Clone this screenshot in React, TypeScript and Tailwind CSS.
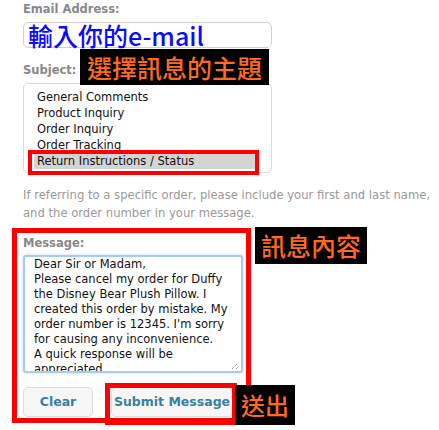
import React from "react";

const font = { fontFamily: '"DejaVu Sans", "Liberation Sans", sans-serif' };
const cjk = { fontFamily: '"Noto Sans CJK TC", "Noto Sans CJK SC", sans-serif' };

export default function App() {
  const items = ["General Comments", "Product Inquiry", "Order Inquiry", "Order Tracking"];
  const msg = [
    "Dear Sir or Madam,",
    "Please cancel my order for Duffy",
    "the Disney Bear Plush Pillow. I",
    "created this order by mistake. My",
    "order number is 12345. I'm sorry",
    "for causing any inconvenience.",
    "A quick response will be",
    "appreciated.",
  ];
  return (
    <div className="relative w-[439px] h-[430px] bg-white overflow-hidden" style={font}>
      <div className="pl-[23px] flex flex-col items-start">
        <div className="text-[11.5px] font-bold text-[#888] leading-[16px] pt-[1px]">Email Address:</div>
        <div className="mt-[5px] w-[249px] h-[26px] border border-[#d0d0d0] rounded-[5px] flex items-center pl-[4px]">
          <span className="text-[25px] leading-[24px] font-medium text-[#0a0aff] whitespace-nowrap" style={cjk}>輸入你的e-mail</span>
        </div>
        <div className="mt-[14px] text-[11.5px] font-bold text-[#888] leading-[16px]">Subject:</div>
        <div className="mt-[5px] w-[249px] h-[90px] border border-[#d8d8d8] rounded-[5px] pt-[5px] text-[11.5px] text-[#111] leading-[16px] flex flex-col">
          {items.map((t) => (
            <div key={t} className="ml-[10px] pl-[3px] whitespace-nowrap">{t}</div>
          ))}
          <div className="ml-[10px] w-[223px] pl-[3px] bg-[#d4d4d4] whitespace-nowrap">Return Instructions / Status</div>
        </div>
        <p className="mt-[13px] w-[414px] text-[11.6px] leading-[18px] text-[#999]">
          If referring to a specific order, please include your first and last name, and the order number in your message.
        </p>
        <div className="mt-[13px] text-[11.5px] font-bold text-[#888] leading-[16px]">Message:</div>
        <div className="relative mt-[4px] w-[220px] h-[118px] border-2 border-[#a9cbec] rounded-[3px] shadow-[0_0_3px_#b8d6f3] bg-white overflow-hidden pl-[9px] text-[11.5px] leading-[15px] text-[#111] flex flex-col">
          {msg.map((l, i) => (
            <div key={i} className="whitespace-nowrap">{l}</div>
          ))}
          <svg className="absolute right-[1px] bottom-[1px]" width="9" height="9" viewBox="0 0 9 9">
            <line x1="1" y1="8" x2="8" y2="1" stroke="#777" strokeWidth="1" strokeDasharray="1 1" />
            <line x1="5" y1="8" x2="8" y2="5" stroke="#777" strokeWidth="1" strokeDasharray="1 1" />
          </svg>
        </div>
        <div className="mt-[14px] flex gap-[18px]">
          <div className="w-[70px] h-[30px] border border-[#dcdcdc] rounded-[5px] bg-[#f6f6f6] flex items-center justify-center text-[12.5px] font-bold text-[#3a7f9f]">Clear</div>
          <div className="w-[122px] h-[30px] border border-[#dcdcdc] rounded-[5px] bg-[#f6f6f6] flex items-center justify-center text-[12.5px] font-bold text-[#3a7f9f] whitespace-nowrap">Submit Message</div>
        </div>
      </div>

      {/* annotation overlays */}
      <div className="absolute left-[80px] top-[49px] w-[189px] h-[36px] bg-black flex items-center justify-center">
        <span className="text-[25px] leading-none font-medium text-[#ff6a1f]" style={cjk}>選擇訊息的主題</span>
      </div>
      <div className="absolute left-[28px] top-[150px] w-[231px] h-[25px] border-[4px] border-[#ff0000]" />
      <div className="absolute left-[12px] top-[228px] w-[239px] h-[195px] border-[5px] border-[#ff0000]" />
      <div className="absolute left-[255px] top-[227px] w-[112px] h-[37px] bg-black flex items-center justify-center">
        <span className="text-[25px] leading-none font-medium text-[#ff6a1f]" style={cjk}>訊息內容</span>
      </div>
      <div className="absolute left-[105px] top-[383px] w-[132px] h-[42px] border-[5px] border-[#ff0000]" />
      <div className="absolute left-[235px] top-[385px] w-[60px] h-[40px] bg-black flex items-center justify-center">
        <span className="text-[24px] leading-none font-medium text-[#ff6a1f]" style={cjk}>送出</span>
      </div>
    </div>
  );
}
